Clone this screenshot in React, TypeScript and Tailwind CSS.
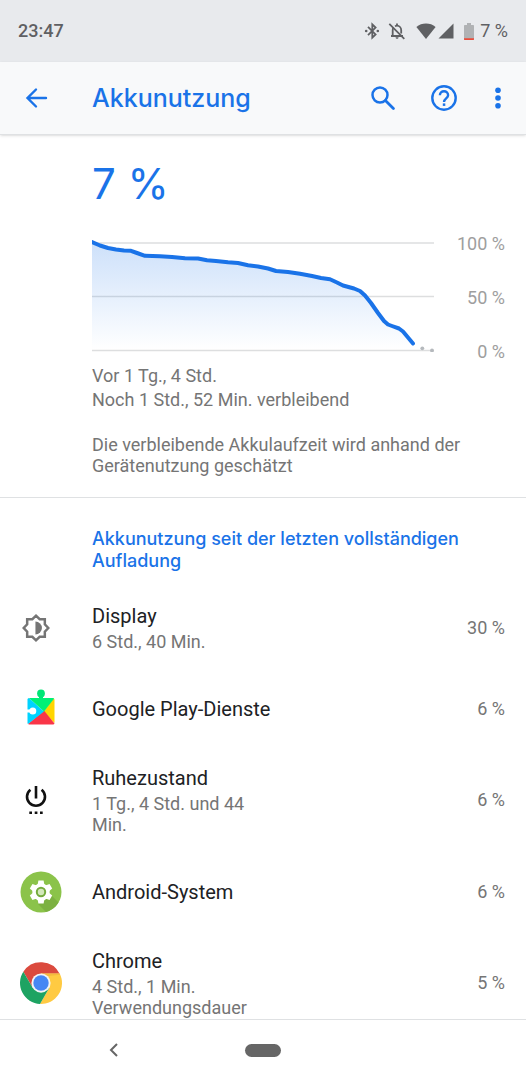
import React from "react";

type UsageItem = {
  name: string;
  details?: string;
  percent: string;
  icon: React.ReactNode;
};

const BluetoothIcon = () => (
  <svg viewBox="0 0 16 18" className="h-[18px] w-4" fill="none" stroke="#5f6063" strokeWidth="1.8">
    <path d="M4 4.8l7.6 7.6L8.3 15.7V2.3l3.3 3.3L4 13.2" />
    <circle cx="2.2" cy="9" r="1.3" fill="#5f6063" stroke="none" />
    <circle cx="13.8" cy="9" r="1.3" fill="#5f6063" stroke="none" />
  </svg>
);

const BellOffIcon = () => (
  <svg viewBox="0 0 18 18" className="h-[18px] w-[18px]" fill="none" stroke="#5f6063" strokeWidth="1.8">
    <path d="M3 14h12M4.7 14V8.2c0-1 .3-1.9.8-2.6M7 4.2c.6-.3 1.3-.5 2-.5 2.4 0 4.2 2 4.2 4.5v3.3" />
    <path d="M9 3.6V1.6M1.3 1.8l15 15" />
    <path d="M7.6 15.2h2.9c0 .9-.6 1.6-1.4 1.6s-1.5-.7-1.5-1.6z" fill="#5f6063" stroke="none" />
  </svg>
);

const WifiIcon = () => (
  <svg viewBox="0 0 20 16" className="h-4 w-5" fill="#5f6063">
    <path d="M10 16L.4 3.9C3.1 1.7 6.4 .5 10 .5s6.9 1.2 9.6 3.4z" />
  </svg>
);

const SignalIcon = () => (
  <svg viewBox="0 0 16 16" className="h-4 w-4" fill="#5f6063">
    <path d="M15.5 .5V15.5H.5z" />
  </svg>
);

const BatteryIcon = () => (
  <svg viewBox="0 0 10 17" className="h-[17px] w-2.5">
    <path d="M3 0h4v2h2.2q.8 0 .8.8V16.2q0 .8-.8.8H.8q-.8 0-.8-.8V2.8Q0 2 .8 2H3z" fill="#b0b2b4" />
    <path d="M0 15.2h10v1q0 .8-.8.8H.8q-.8 0-.8-.8z" fill="#ea4b3a" />
  </svg>
);

const BackArrowIcon = () => (
  <svg viewBox="0 0 24 24" className="h-6 w-6" fill="none" stroke="currentColor" strokeWidth="2.4" strokeLinecap="round">
    <path d="M22 12H4M12 3.5L3.5 12l8.5 8.5" />
  </svg>
);

const SearchIcon = () => (
  <svg viewBox="0 0 24 24" className="h-6 w-6" fill="none" stroke="currentColor" strokeWidth="2.5">
    <circle cx="9" cy="9" r="7.5" />
    <path d="M14.4 14.4l8 8" strokeWidth="2.8" strokeLinecap="round" />
  </svg>
);

const HelpIcon = () => (
  <svg viewBox="0 0 26 26" className="h-[26px] w-[26px]" fill="none" stroke="currentColor" strokeWidth="2.4">
    <circle cx="13" cy="13" r="11.7" />
    <path d="M8.9 10.3c0-2.3 1.8-4 4.1-4s4.1 1.7 4.1 4c0 2.9-4.1 3.3-4.1 6.7" />
    <path d="M11.8 18.4h2.5v2.5h-2.5z" fill="currentColor" stroke="none" />
  </svg>
);

const MoreIcon = () => (
  <svg viewBox="0 0 6 22" className="h-[22px] w-1.5" fill="currentColor">
    <circle cx="3" cy="3.3" r="2.8" />
    <circle cx="3" cy="11" r="2.8" />
    <circle cx="3" cy="18.7" r="2.8" />
  </svg>
);

const DisplayIcon = () => (
  <svg viewBox="1 1 26 26" className="h-7 w-7">
    <path
      d="M14 2.6l3.4 3.2h4.8v4.8l3.2 3.4-3.2 3.4v4.8h-4.8L14 25.4l-3.4-3.2H5.8v-4.8L2.6 14l3.2-3.4V5.8h4.8z"
      fill="none"
      stroke="#757575"
      strokeWidth="2.3"
    />
    <path d="M13.5 8a6 6 0 0 1 0 12z" fill="#757575" />
  </svg>
);

const PlayServicesIcon = () => (
  <svg viewBox="0 0 28 40" className="h-10 w-7">
    <circle cx="14" cy="4.5" r="3.9" fill="#00e676" />
    <path d="M12 7h4v3h-4z" fill="#00e676" />
    <path d="M26.5 9.5q1.2 0 1 1.5V34L16.5 22.5z" fill="#ffd500" />
    <path d="M1.2 34.7L17 21.5l10.5 13q-.3 1-1.5 1H2q-.6 0-.8-.8z" fill="#f93648" />
    <path d="M2 9L17 22.5 1 35q-.5-.4-.5-1V10.5Q.5 9 2 9z" fill="#00d3ff" />
    <path d="M2 9H26q.8 0 1.2.5L17 22.5z" fill="#00f076" />
    <circle cx="5.8" cy="22" r="3.5" fill="#fff" />
    <path d="M0 20.5h4v3H0z" fill="#fff" />
  </svg>
);

const PowerIcon = () => (
  <svg viewBox="0 0 22 30" className="h-[30px] w-[22px]" fill="none" stroke="#111" strokeWidth="2.6">
    <path d="M11 1v12.5M5.4 4.7a9 9 0 1 0 11.2 0" />
    <path d="M4.3 27.7H7M9.7 27.7h2.7M15 27.7h2.7" strokeWidth="2.6" />
  </svg>
);

const AndroidSystemIcon = () => (
  <svg viewBox="0 0 42 42" className="h-[42px] w-[42px]">
    <circle cx="21" cy="21" r="20.5" fill="#8bc34a" />
    <path d="M31.5 24.5l7 7A20.5 20.5 0 0 1 26 40.9l-8-8z" fill="#7cb141" />
    <g fill="#fff">
      <circle cx="21" cy="21" r="8.7" />
      <path id="tooth" d="M18.4 9.6h5.2l1 5.2h-7.2z" />
      <use href="#tooth" transform="rotate(60 21 21)" />
      <use href="#tooth" transform="rotate(120 21 21)" />
      <use href="#tooth" transform="rotate(180 21 21)" />
      <use href="#tooth" transform="rotate(240 21 21)" />
      <use href="#tooth" transform="rotate(300 21 21)" />
    </g>
    <circle cx="21" cy="21" r="4.2" fill="#d3e8bb" stroke="#74ab3c" strokeWidth="2" />
  </svg>
);

const ChromeIcon = () => (
  <svg viewBox="0 0 48 48" className="h-[42px] w-[42px]">
    <path d="M3.81 11.03A24 24 0 0 1 45.33 13.5L24 13.5 14.47 29.5z" fill="#db4a3e" />
    <path d="M45.33 13A24 24 0 0 1 22.86 47.97L33.53 29.5 24 13z" fill="#ffca42" />
    <path d="M22.86 47.97A24 24 0 0 1 3.81 11.03L14.47 29.5 33.53 29.5z" fill="#1da362" />
    <path d="M24 13h21.33l.7 1.7-19 1.8z" fill="#e9a93a" opacity=".5" />
    <circle cx="24" cy="24" r="11" fill="#f4f4f4" />
    <circle cx="24" cy="24" r="8.8" fill="#4687f4" />
  </svg>
);

const LINE =
  "0,2 8,5.5 16,8 24,9.5 32,10.5 39,10.8 45,13 53,15.8 68,16.3 80,17 93,18.2 106,18.5 115,20.2 124,21 136,22.3 146,23 156,25.2 166,26.5 176,28.5 184,31 196,32 208,33.7 220,36 229,38 238,39.3 245,42.5 251,45.5 262,48.5 268,51 273,55.5 279,63 286,73 292,81 296,84.5 300,86 307,88.5 311,91.5 316,97.5 321,103.5";

const BatteryChart = () => (
  <svg viewBox="0 0 342 112" className="w-full" role="img" aria-label="Akkustand">
    <defs>
      <linearGradient id="fill" x1="0" y1="0" x2="0" y2="1">
        <stop offset="0" stopColor="#1a73e8" stopOpacity="0.22" />
        <stop offset="1" stopColor="#1a73e8" stopOpacity="0" />
      </linearGradient>
    </defs>
    <path d="M0 3h342M0 56.5h342M0 110.5h342" stroke="#dddedf" strokeWidth="1.5" />
    <polygon points={`${LINE} 321,110 0,110`} fill="url(#fill)" />
    <polyline points={LINE} fill="none" stroke="#1a73e8" strokeWidth="4" strokeLinejoin="round" strokeLinecap="round" />
    <circle cx="330.3" cy="108.3" r="1.9" fill="#b5b9bd" />
    <circle cx="340" cy="110.5" r="1.9" fill="#b5b9bd" />
  </svg>
);

const items: UsageItem[] = [
  { name: "Display", details: "6 Std., 40 Min.", percent: "30 %", icon: <DisplayIcon /> },
  { name: "Google Play-Dienste", percent: "6 %", icon: <PlayServicesIcon /> },
  { name: "Ruhezustand", details: "1 Tg., 4 Std. und 44 Min.", percent: "6 %", icon: <PowerIcon /> },
  { name: "Android-System", percent: "6 %", icon: <AndroidSystemIcon /> },
  { name: "Chrome", details: "4 Std., 1 Min. Verwendungsdauer", percent: "5 %", icon: <ChromeIcon /> },
];

// App icons are wider than the plain symbols and sit a little further right
const isSymbol = (item: UsageItem) => item.name === "Display" || item.name === "Ruhezustand";

const App = () => {
  return (
    <div className="flex h-screen flex-col bg-white font-['Roboto',sans-serif] text-lg text-[#757575]">
      {/* Status bar */}
      <div className="flex h-[62px] shrink-0 items-center justify-between bg-[#e8eaed] px-[18px] text-[#5f6063]">
        <span className="font-medium">23:47</span>
        <div className="flex items-center">
          <BluetoothIcon />
          <span className="ml-2"><BellOffIcon /></span>
          <span className="ml-2.5"><WifiIcon /></span>
          <span className="ml-0.5"><SignalIcon /></span>
          <span className="ml-2.5"><BatteryIcon /></span>
          <span className="ml-1.5">7 %</span>
        </div>
      </div>

      {/* App bar */}
      <header className="z-10 flex h-[73px] shrink-0 items-center border-b border-[#dfe1e3] bg-[#f8f9fa] pr-[25px] pl-6 text-[#1a73e8] shadow-sm">
        <button type="button" aria-label="Zurück">
          <BackArrowIcon />
        </button>
        <h1 className="ml-11 flex-1 font-['Inter',sans-serif] text-[25px] font-medium">Akkunutzung</h1>
        <button type="button" aria-label="Suchen">
          <SearchIcon />
        </button>
        <button type="button" aria-label="Hilfe" className="ml-9">
          <HelpIcon />
        </button>
        <button type="button" aria-label="Weitere Optionen" className="ml-[38px]">
          <MoreIcon />
        </button>
      </header>

      <main className="min-h-0 flex-1 overflow-hidden">
        {/* Battery level */}
        <section className="border-b border-[#dfe1e3] pt-[23px] pr-[21px] pb-[21px] pl-[92px]">
          <p className="font-['Inter',sans-serif] text-[42px] leading-[52px] text-[#1a73e8]">7 %</p>
          <div className="mt-6 flex">
            <div className="flex-1 pt-1.5 pb-2.5">
              <BatteryChart />
            </div>
            <div className="flex w-[71px] flex-col justify-between text-right leading-5 text-[#9e9e9e]">
              <span>100 %</span>
              <span>50 %</span>
              <span>0 %</span>
            </div>
          </div>
          <p className="mt-0.5 leading-6">Vor 1 Tg., 4 Std.</p>
          <p className="leading-6">Noch 1 Std., 52 Min. verbleibend</p>
          <p className="mt-[22px] leading-[21px]">Die verbleibende Akkulaufzeit wird anhand der Gerätenutzung geschätzt</p>
        </section>

        {/* Usage per app */}
        <section className="pt-[30px]">
          <h2 className="pr-[21px] pb-[15px] pl-[92px] font-['Inter',sans-serif] leading-[22px] font-medium text-[#1a73e8]">
            Akkunutzung seit der letzten vollständigen Aufladung
          </h2>
          <ul>
            {items.map((item) => (
              <li key={item.name} className="flex min-h-[81px] items-center py-4 pr-[21px]">
                <div className={isSymbol(item) ? "flex w-[72px] justify-center" : "flex w-[82px] justify-center"}>
                  {item.icon}
                </div>
                <div className={isSymbol(item) ? "flex-1 pl-5" : "flex-1 pl-2.5"}>
                  <h3 className="text-xl leading-[26px] text-[#202124]">{item.name}</h3>
                  {item.details && <p className="mt-0.5 max-w-44 leading-[21px]">{item.details}</p>}
                </div>
                <span>{item.percent}</span>
              </li>
            ))}
          </ul>
        </section>
      </main>

      {/* Navigation bar */}
      <nav className="grid h-[61px] shrink-0 grid-cols-[1fr_36px_1fr] items-center border-t border-[#dfe1e3] bg-white">
        <button type="button" aria-label="Zurück" className="ml-[108px] justify-self-start">
          <svg viewBox="0 0 12 14" className="h-3.5 w-3" fill="none" stroke="#666" strokeWidth="2">
            <path d="M9 1L3 7l6 6" />
          </svg>
        </button>
        <button type="button" aria-label="Startbildschirm" className="h-[13px] rounded-full bg-[#666]" />
      </nav>
    </div>
  );
};

export default App;
